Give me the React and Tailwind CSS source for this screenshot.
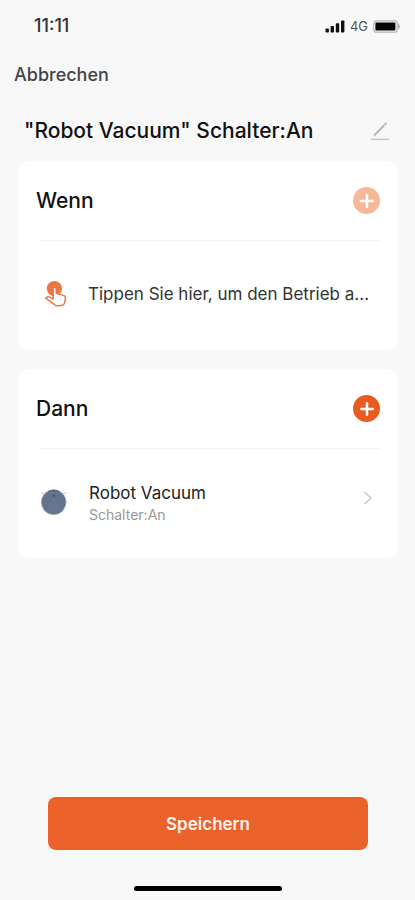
import { FiPlus } from "react-icons/fi";

function StatusBar() {
  return (
    <div className="flex h-[52px] items-center justify-between pl-[34px] pr-[14px]">
      <span className="text-[18px] font-medium leading-6 text-[#333333]">11:11</span>
      <div className="flex items-center gap-[5px]">
        <svg width="20" height="13" viewBox="0 0 20 13" fill="#111111" aria-hidden="true">
          <rect x="0.5" y="8.5" width="3.4" height="4" rx="0.8" />
          <rect x="5.6" y="6" width="3.4" height="6.5" rx="0.8" />
          <rect x="10.8" y="3.3" width="3.4" height="9.2" rx="0.8" />
          <rect x="16" y="0.5" width="3.4" height="12" rx="0.8" />
        </svg>
        <span className="text-[13px] leading-4 text-[#555555]">4G</span>
        <svg width="28" height="13" viewBox="0 0 28 13" aria-hidden="true">
          <rect x="0.8" y="0.8" width="23.4" height="11.4" rx="2.5" fill="none" stroke="#b4b4b4" strokeWidth="1.2" />
          <rect x="2.4" y="2.5" width="20" height="8" rx="1" fill="#050505" />
          <path d="M25 3l2.4 3.5L25 10z" fill="#b4b4b4" />
        </svg>
      </div>
    </div>
  );
}

function EditIcon() {
  return (
    <svg width="18" height="20" viewBox="0 0 18 20" fill="none" stroke="#b5b5b5" aria-hidden="true">
      <path d="M3 14.6 13.2 4.2" strokeWidth="2" />
      <path d="M13.6 3.8l1.8-1.8" strokeWidth="2" />
      <path d="M0 18.4h18" stroke="#c6c6c6" strokeWidth="1.5" />
    </svg>
  );
}

function TapIcon() {
  return (
    <svg width="28" height="28" viewBox="0 0 28 28" aria-hidden="true">
      <circle cx="13.4" cy="8.6" r="7.6" fill="#ee7444" />
      <path
        d="M12.2 19V8.8c0-2.2 3-2.2 3 0v4.6l7.2 2c1.5.4 2.2 1.4 2 3l-.8 4.2c-.3 1.5-1.1 2.5-2.6 2.7l-4.6.5c-1.2.1-2-.3-2.8-1.1l-8.8-6.6c.9-1.5 2.5-1.7 4-.9z"
        fill="#ffffff"
        stroke="#ee7444"
        strokeWidth="1.5"
        strokeLinejoin="round"
      />
    </svg>
  );
}

function VacuumIcon() {
  return (
    <svg width="28" height="28" viewBox="0 0 28 28" aria-hidden="true">
      <path d="M1 4.4l4 2M26.4 4.4l-4 2" stroke="#c3c9d2" strokeWidth="1" />
      <circle cx="13.7" cy="14.2" r="12.8" fill="#b4becb" />
      <circle cx="13.7" cy="14.2" r="12" fill="#63738f" />
      <path d="M13.7 8.5 6 23.4a12 12 0 0 0 15.4 0z" fill="#68768f" />
      <path d="M8 3.6a12 12 0 0 1 11.4 0" fill="none" stroke="#566279" strokeWidth="1" />
      <circle cx="13.7" cy="2.9" r="0.9" fill="#465268" />
      <circle cx="13.7" cy="7.8" r="1.2" fill="#4b5870" />
    </svg>
  );
}

function Card({ title, addLabel, addClassName, children }) {
  return (
    <section className="rounded-xl bg-white px-[18px]">
      <div className="flex h-[79px] items-center justify-between">
        <h2 className="text-[21px] font-medium leading-7 text-[#111111]">{title}</h2>
        <button
          type="button"
          aria-label={addLabel}
          className={`flex h-[27px] w-[27px] items-center justify-center rounded-full text-white ${addClassName}`}
        >
          <FiPlus className="h-5 w-5" strokeWidth={3} />
        </button>
      </div>
      <hr className="ml-1 border-[#f4f4f4]" />
      <button type="button" className="flex h-[109px] w-full items-center pb-1 text-left">
        {children}
      </button>
    </section>
  );
}

export default function App() {
  return (
    <div className="flex min-h-screen flex-col bg-[#f8f8f8] font-['Inter',sans-serif]">
      <StatusBar />

      <header className="flex h-[45px] items-center px-[14px]">
        <button type="button" className="text-[18px] font-medium leading-6 text-[#444444]">
          Abbrechen
        </button>
      </header>

      <main className="flex-1 pl-[18px] pr-[17px]">
        <div className="flex h-16 items-center justify-between pl-[6px] pr-[9px] pt-[3px]">
          <h1 className="text-[21px] font-medium leading-7 text-[#111111]">
            "Robot Vacuum" Schalter:An
          </h1>
          <button type="button" aria-label="Name bearbeiten">
            <EditIcon />
          </button>
        </div>

        <div className="flex flex-col gap-[19px]">
          <Card title="Wenn" addLabel="Bedingung hinzufügen" addClassName="bg-[#f5b999]">
            <span className="flex w-[52px] shrink-0 pl-[5px]">
              <TapIcon />
            </span>
            <span className="min-w-0 truncate text-[17px] leading-6 text-[#333333]">
              Tippen Sie hier, um den Betrieb a...
            </span>
          </Card>

          <Card title="Dann" addLabel="Aktion hinzufügen" addClassName="bg-[#eb5a20]">
            <span className="flex w-[53px] shrink-0 pl-[4px]">
              <VacuumIcon />
            </span>
            <span className="flex min-w-0 flex-1 flex-col pt-[2px]">
              <span className="text-[17px] leading-6 text-[#222222]">Robot Vacuum</span>
              <span className="text-[14px] leading-5 text-[#999999]">Schalter:An</span>
            </span>
            <svg className="mb-2 mr-[7px]" width="10" height="16" viewBox="0 0 10 16" fill="none" aria-hidden="true">
              <path d="M1.5 2 8 8l-6.5 6" stroke="#c8c8c8" strokeWidth="1.5" />
            </svg>
          </Card>
        </div>
      </main>

      <footer className="flex flex-col items-center pb-[9px] pl-12 pr-[47px]">
        <button
          type="button"
          className="h-[53px] w-full rounded-lg bg-[#eb622b] text-[17px] font-semibold leading-6 text-[#fff3ec]"
        >
          Speichern
        </button>
        <div className="mt-9 h-[5px] w-[148px] rounded-full bg-black" />
      </footer>
    </div>
  );
}
